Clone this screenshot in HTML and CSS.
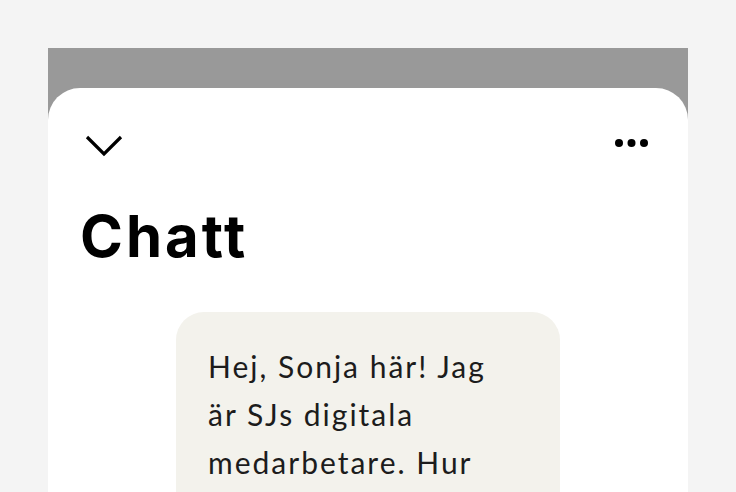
FILE: index.html
```html
<!DOCTYPE html>
<html lang="sv">
<head>
    <meta charset="UTF-8">
    <meta name="viewport" content="width=device-width, initial-scale=1.0">
    <title>Chatt</title>
    <link rel="stylesheet" href="styles.css">
</head>
<body>
    <div class="backdrop">
        <div class="sheet">
            <div class="sheet-header">
                <button class="icon-btn" aria-label="Stäng">
                    <svg width="48" height="48" viewBox="0 0 48 48">
                        <path d="M7 16 L24 33 L41 16" fill="none" stroke="#000" stroke-width="3.2"/>
                    </svg>
                </button>
                <button class="icon-btn" aria-label="Fler val">
                    <svg width="48" height="48" viewBox="0 0 48 48">
                        <circle cx="11" cy="22" r="4"/>
                        <circle cx="23.5" cy="22" r="4"/>
                        <circle cx="36" cy="22" r="4"/>
                    </svg>
                </button>
            </div>

            <h1 class="title">Chatt</h1>

            <div class="messages">
                <div class="bubble">
                    Hej, Sonja här! Jag är SJs digitala medarbetare. Hur kan jag hjälpa dig?
                </div>
            </div>
        </div>
    </div>
</body>
</html>
```

FILE: styles.css
```css
body {
    margin: 0;
    padding: 48px 48px 0;
    background-color: #f4f4f4;
    font-family: 'Lato', sans-serif;
    overflow: hidden;
}

/* grey overlay behind the sheet */
.backdrop {
    background-color: #999999;
    padding-top: 40px;
}

.sheet {
    background-color: #ffffff;
    border-radius: 32px 32px 0 0;
    padding: 33px 32px 40px;
}

.sheet-header {
    display: flex;
    justify-content: space-between;
    align-items: center;
    height: 48px;
}

.icon-btn {
    width: 48px;
    height: 48px;
    padding: 0;
    border: none;
    background: none;
    cursor: pointer;
}

.icon-btn svg {
    display: block;
}

.title {
    font-family: 'Inter', sans-serif;
    font-weight: 700;
    font-size: 58px;
    line-height: 58px;
    letter-spacing: 3px;
    color: #000;
    margin: 38px 0 47px;
}

.messages {
    display: flex;
    justify-content: center;
}

.bubble {
    width: 384px;
    box-sizing: border-box;
    padding: 30px 48px 32px 32px;
    background-color: #f3f2ec;
    border-radius: 28px;
    font-size: 30px;
    line-height: 48px;
    letter-spacing: 2px;
    color: #1c1c1c;
}
```
